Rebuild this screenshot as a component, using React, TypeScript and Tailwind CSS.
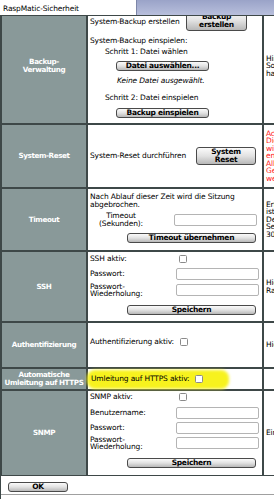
import React from "react";

const btn =
  "flex items-center justify-center rounded-[3px] border border-[#4a4a4a] bg-gradient-to-b from-[#fbfbfb] via-[#e2e2e2] to-[#b8b8b8] font-bold text-black tracking-[-0.3px] leading-[8px] text-center";

function Label({ children }: { children: React.ReactNode }) {
  return (
    <div className="flex items-center justify-center bg-[#899999] text-center text-white font-bold text-[7.2px] leading-[8px] tracking-[-0.4px]">
      <div>{children}</div>
    </div>
  );
}

function Help({ lines, red }: { lines: string[]; red?: boolean }) {
  return (
    <div className={"flex items-center overflow-hidden bg-white pl-[2px] leading-[7.5px] " + (red ? "text-[#ff2020]" : "text-black")}>
      <div>
        {lines.map((l, i) => (
          <div key={i} className="whitespace-nowrap">
            {l}
          </div>
        ))}
      </div>
    </div>
  );
}

function Check() {
  return <div className="h-[8px] w-[8px] shrink-0 rounded-[1.5px] border border-[#8a8a8a] bg-white" />;
}

function Input() {
  return <div className="h-[12px] w-[83px] shrink-0 rounded-[2px] border border-[#b4b4b4] bg-white" />;
}

export default function App() {
  return (
    <div className="relative h-[499px] w-[274px] overflow-hidden bg-white text-[7.5px] leading-[8px] tracking-[-0.15px] text-black font-['DejaVu_Sans',sans-serif]">
      {/* title bar */}
      <div className="flex h-[16px] border-b border-[#3e4848] bg-gradient-to-b from-[#9aa3c8] to-[#b8bfdc]">
        <div className="flex h-full w-[137px] items-center border-r border-[#7d86a8] bg-white pl-[3px] pt-[3px]">
          RaspMatic-Sicherheit
        </div>
      </div>

      <div className="h-[460px] overflow-hidden">
        <div className="-mt-[7px] grid grid-cols-[84px_174px_1fr] grid-rows-[114px_62px_61px_69px_44px_20px_84px] gap-[2px] bg-[#3e4848] pb-[2px] pl-[2px]">
          {/* Row 1 */}
          <Label>
            Backup-
            <br />
            Verwaltung
          </Label>
          <div className="flex flex-col bg-white">
            <div className="mt-[1px] flex h-[21px] items-center">
              <div className="w-[98px] pl-[2px] pt-[2px]">System-Backup erstellen</div>
              <div className={btn + " h-[21px] w-[61px]"}>
                Backup
                <br />
                erstellen
              </div>
            </div>
            <div className="mt-[6px] h-[8px] pl-[2px]">System-Backup einspielen:</div>
            <div className="mt-[3px] h-[8px] pl-[17px]">Schritt 1: Datei wählen</div>
            <div className={btn + " ml-[28px] mt-[5px] h-[10px] w-[93px]"}>Datei auswählen...</div>
            <div className="mt-[6px] h-[8px] pl-[29px] italic">Keine Datei ausgewählt.</div>
            <div className="mt-[9px] h-[8px] pl-[17px]">Schritt 2: Datei einspielen</div>
            <div className={btn + " ml-[28px] mt-[6px] h-[10px] w-[93px]"}>Backup einspielen</div>
          </div>
          <Help lines={["Hinweis: Die", "Sollte das", "haben"]} />

          {/* Row 2 */}
          <Label>System-Reset</Label>
          <div className="flex items-center justify-between bg-white pl-[2px] pr-[6px]">
            <div>System-Reset durchführen</div>
            <div className={btn + " h-[18px] w-[60px]"}>
              System
              <br />
              Reset
            </div>
          </div>
          <Help red lines={["Achtung!", "Die", "wird", "entfernt", "Alle", "Geräte", "werden"]} />

          {/* Row 3 */}
          <Label>Timeout</Label>
          <div className="flex flex-col bg-white">
            <div className="mt-[4px] pl-[2px]">
              Nach Ablauf dieser Zeit wird die Sitzung
              <br />
              abgebrochen.
            </div>
            <div className="mt-[2px] flex h-[17px] items-center">
              <div className="w-[64px] pl-[2px] text-center">
                Timeout
                <br />
                (Sekunden):
              </div>
              <div className="ml-[22px]">
                <Input />
              </div>
            </div>
            <div className={btn + " ml-[39px] mt-[5px] h-[10px] w-[129px]"}>Timeout übernehmen</div>
          </div>
          <Help lines={["Erfolgt", "ist", "Der", "Sekunden", "300"]} />

          {/* Row 4 */}
          <Label>SSH</Label>
          <div className="flex flex-col bg-white">
            <div className="mt-[2px] flex h-[10px] items-center">
              <div className="w-[88px] pl-[2px]">SSH aktiv:</div>
              <div className="ml-[3px]">
                <Check />
              </div>
            </div>
            <div className="mt-[3px] flex h-[13px] items-center">
              <div className="w-[88px] pl-[2px]">Passwort:</div>
              <Input />
            </div>
            <div className="mt-[2px] flex h-[16px] items-center">
              <div className="w-[88px] pl-[2px] leading-[7.5px]">
                Passwort-
                <br />
                Wiederholung:
              </div>
              <Input />
            </div>
            <div className={btn + " ml-[39px] mt-[7px] h-[10px] w-[129px]"}>Speichern</div>
          </div>
          <Help lines={["Hier", "Raspberry"]} />

          {/* Row 5 */}
          <Label>Authentifizierung</Label>
          <div className="flex items-center bg-white pb-[6px]">
            <div className="w-[88px] pl-[2px]">Authentifizierung aktiv:</div>
            <div className="ml-[4px]">
              <Check />
            </div>
          </div>
          <Help lines={["Hier"]} />

          {/* Row 6 */}
          <Label>
            Automatische
            <br />
            Umleitung auf HTTPS
          </Label>
          <div className="relative flex items-center bg-white">
            <div className="absolute left-[-1px] top-[1px] h-[19px] w-[142px] rounded-[8px] bg-[#f7f21e] blur-[1.5px]" />
            <div className="relative pl-[3px]">Umleitung auf HTTPS aktiv:</div>
            <div className="relative ml-[5px]">
              <Check />
            </div>
          </div>
          <Help lines={[""]} />

          {/* Row 7 */}
          <Label>SNMP</Label>
          <div className="flex flex-col bg-white">
            <div className="mt-[1px] flex h-[10px] items-center">
              <div className="w-[88px] pl-[2px]">SNMP aktiv:</div>
              <div className="ml-[3px]">
                <Check />
              </div>
            </div>
            <div className="mt-[4px] flex h-[13px] items-center">
              <div className="w-[88px] pl-[2px]">Benutzername:</div>
              <Input />
            </div>
            <div className="mt-[2px] flex h-[13px] items-center">
              <div className="w-[88px] pl-[2px]">Passwort:</div>
              <Input />
            </div>
            <div className="mt-[1px] flex h-[16px] items-center">
              <div className="w-[88px] pl-[2px] leading-[7.5px]">
                Passwort-
                <br />
                Wiederholung:
              </div>
              <Input />
            </div>
            <div className={btn + " ml-[39px] mt-[7px] h-[10px] w-[129px]"}>Speichern</div>
          </div>
          <Help lines={["Ein"]} />
        </div>
      </div>

      {/* footer */}
      <div className="h-[23px] border-l border-[#3e4848] bg-white pt-[6px]">
        <div className="h-[12px] pl-[7px]">
          <div className={btn + " h-[10px] w-[60px]"}>OK</div>
        </div>
        <div className="h-[1px] bg-[#a0a0a0]" />
      </div>
    </div>
  );
}
